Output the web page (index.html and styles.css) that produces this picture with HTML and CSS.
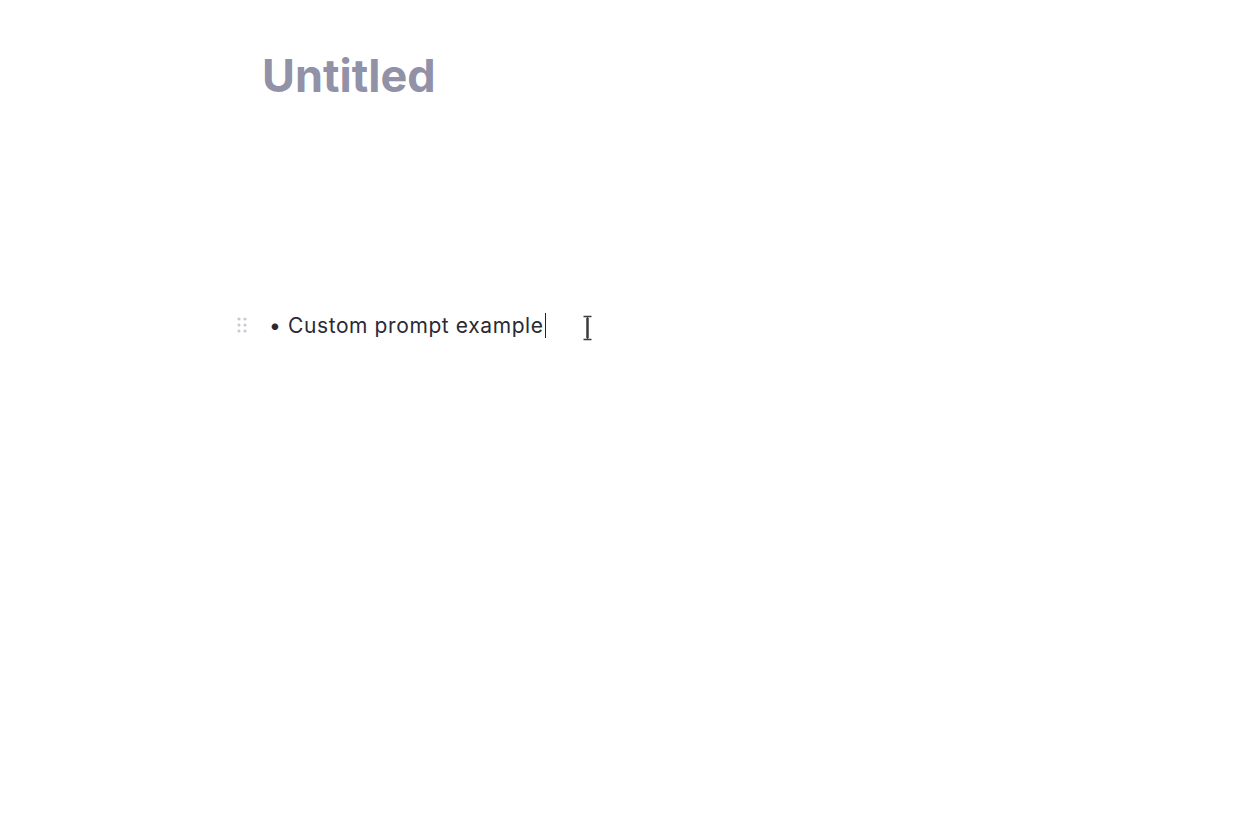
FILE: index.html
```html
<!DOCTYPE html>
<html>
<head>
<meta charset="utf-8">
<link rel="stylesheet" href="styles.css">
</head>
<body>
<main class="editor">
  <h1 class="title">Untitled</h1>
  <div class="block">
    <div class="handle">
      <svg width="10" height="16" viewBox="0 0 10 16">
        <circle cx="2" cy="2" r="1.6"/><circle cx="8" cy="2" r="1.6"/>
        <circle cx="2" cy="8" r="1.6"/><circle cx="8" cy="8" r="1.6"/>
        <circle cx="2" cy="14" r="1.6"/><circle cx="8" cy="14" r="1.6"/>
      </svg>
    </div>
    <span class="bullet">•</span>
    <span class="text">Custom prompt example</span><span class="caret"></span>
    <span class="ibeam">
      <svg width="11" height="26" viewBox="0 0 11 26">
        <path d="M1.5 1.5h4v23h-4M9.5 1.5h-4M9.5 24.5h-4" fill="none" stroke="#fff" stroke-width="3.4"/>
        <path d="M1.5 1.5h8M1.5 24.5h8M5.5 1.5v23" fill="none" stroke="#3a3a3a" stroke-width="1.3"/>
        <path d="M5.5 3v20" stroke="#3a3a3a" stroke-width="2.4"/>
      </svg>
    </span>
  </div>
</main>
</body>
</html>
```
FILE: styles.css
```css
html, body {
  margin: 0;
  padding: 0;
  background: #ffffff;
}
body {
  font-family: Inter, "Noto Sans", sans-serif;
  width: 1242px;
  height: 822px;
  overflow: hidden;
}
.editor {
  padding-left: 262px;
  padding-top: 46px;
}
.title {
  margin: 0;
  font-size: 45px;
  font-weight: 700;
  line-height: 60px;
  color: #9191a7;
}
.block {
  position: relative;
  display: flex;
  align-items: center;
  margin-top: 204px;
  height: 30px;
  font-size: 21px;
  letter-spacing: 0.6px;
  color: #2a2a36;
}
.handle {
  position: absolute;
  left: -25px;
  top: 7px;
  fill: #c9c9d6;
  display: flex;
}
.bullet {
  margin-left: 7px;
  width: 19px;
}
.caret {
  display: inline-block;
  width: 1px;
  height: 25px;
  background: #222;
  margin-left: 1px;
}
.ibeam {
  position: absolute;
  left: 320px;
  top: 5px;
  display: flex;
}
```
